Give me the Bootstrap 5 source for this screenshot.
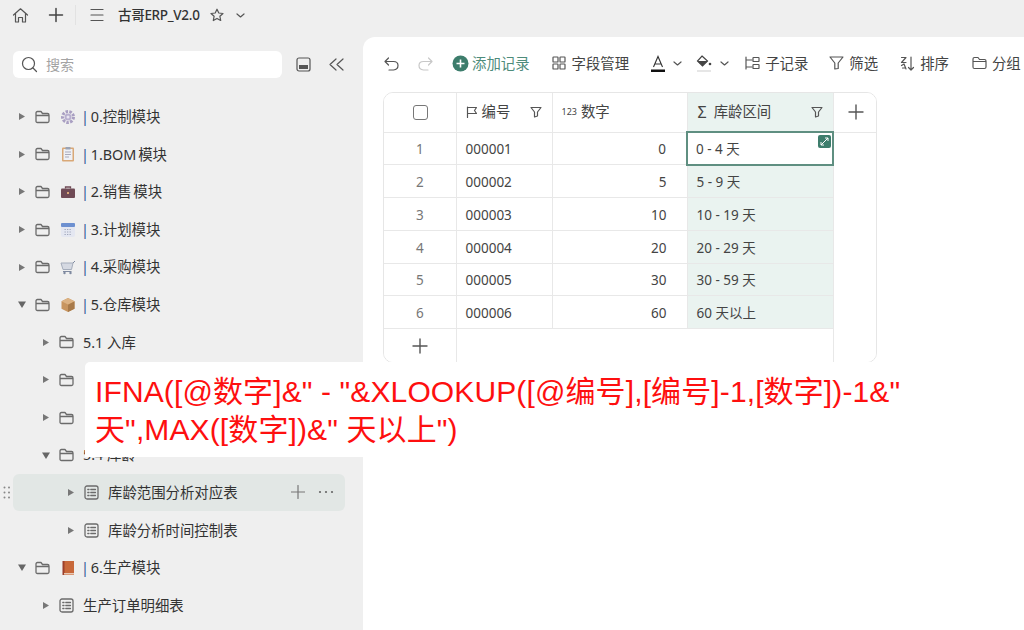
<!DOCTYPE html>
<html lang="zh"><head><meta charset="utf-8"><title>古哥ERP_V2.0</title>
<link href="https://cdn.jsdelivr.net/npm/bootstrap@5.3.0/dist/css/bootstrap.min.css" rel="stylesheet">
<style>
html,body{height:630px;overflow:hidden}
body{font-family:"Noto Sans","Noto Sans CJK SC",sans-serif;font-size:14px;color:#333;background:#efefef;position:relative;width:1024px}
svg{display:block;flex:none}
.ic{fill:none;stroke:#555;stroke-width:1.2;stroke-linecap:round;stroke-linejoin:round}
.topbar{height:30px;padding-left:12px}
.title-txt{font-size:13.5px;letter-spacing:-.3px;font-weight:500;color:#333;margin-left:14px;width:92px;white-space:nowrap}
.sep{width:1px;height:20px;background:#e2e2e2;margin:0 14px 0 11px}
.shell{height:600px}
.side{width:363px;flex:none}
.searchbox{width:269px;height:27px;margin-left:13px;background:#fff;border-radius:6px;color:#a3a3a3;padding-left:8px;gap:8px;font-size:14px}
.side-head{height:68px}
.trow{height:37.6px;display:flex;align-items:center;white-space:nowrap;font-size:14.4px;color:#333}
.l1{padding-left:18px;word-spacing:-2px}.l2{padding-left:42px}.l3{padding-left:67px}
.caret{width:8px;margin-right:9px;flex:none}
.fold{margin-right:9px;flex:none;stroke:#6b6b6b;stroke-width:1.3}
.emo{margin-left:1px;margin-right:5px;flex:none}
.bar{color:#2f5597}
.sel{position:relative}
.sel::before{content:"";position:absolute;left:13px;width:332px;top:0;bottom:1px;background:#e2e7e5;border-radius:6px}
.sel>*{position:relative}
.grip{position:absolute;left:3px;top:12px}
.acts{position:absolute!important;left:291px;top:11px;gap:13px}
.mainpane{flex:1;background:#fff;border-top-left-radius:12px;margin-top:7px;padding:0 0 0 20px;overflow:hidden;min-width:0}
.tools{height:55px;padding:0 0 2px 1px;white-space:nowrap;font-size:14.4px;color:#444}
.tools>span{display:inline-flex;align-items:center}
.tool{gap:4px}
.grid-wrap{width:494px;height:271px;border:1px solid #e6e6e6;border-radius:10px;overflow:hidden}
.dt{table-layout:fixed;border-collapse:collapse;width:493px;height:270px;margin:0;font-size:13.5px;color:#444}
.dt td,.dt th{border:1px solid #e8e8e8;padding:0 8px 0 9px;font-weight:400;vertical-align:middle;background:#fff}
.dt tr.rw td{padding-top:2px}
.dt tr>*:first-child{border-left:0}
.dt tr>*:last-child{border-right:0}
.dt tr:first-child>*{border-top:0;height:39px}
.dt tr.rw>*{height:32.8px}
.dt tr:last-child>*{border-bottom:0}
.dt td.text-end{padding-right:20px}
.dt th{font-size:14.4px}
.dt td.num{color:#777;text-align:center;padding-left:8px;padding-top:1px}
.dt td.active-cell{border:2px solid #5f8f81;padding-left:8px;position:relative}
.tint{background:#eaf3f0!important}
.expand{position:absolute;right:1px;top:2px;width:13px;height:13px;background:#3d7d6c;border-radius:2px}
.hdc{gap:4px;color:#444;white-space:nowrap}
.sigma{font-size:16px;line-height:1;margin-left:1px}
.flt{margin-right:2px}
.cbx{width:15px;height:15px;border:1.3px solid #777;border-radius:3px;margin:auto}
.callout{position:absolute;left:85px;top:362px;width:841px;height:95px;background:#fff;border-top-left-radius:5px;color:#fe0f0f;font-family:"Liberation Sans","Noto Sans CJK SC",sans-serif;font-size:30px;letter-spacing:.12px;line-height:38px;padding:11px 0 0 10px;white-space:nowrap}
</style></head>
<body>
<div class="topbar d-flex align-items-center">
<svg class="ic" width="17" height="17" viewBox="0 0 17 17"><path d="M1.5 8 8.500 1.800 15.500 8M3.500 6.500V15H6.500V10.500H10.500V15H13.500V6.500"/></svg>
<svg class="ic" style="stroke:#444;stroke-width:1.5;margin-left:19px" width="16" height="16" viewBox="0 0 16 16"><path d="M8 1.500V14.500M1.500 8H14.500"/></svg>
<span class="sep"></span>
<svg class="ic" width="14" height="14" viewBox="0 0 14 14"><path d="M1 1.500H13M1 7H13M1 12.500H13"/></svg>
<span class="title-txt">古哥ERP_V2.0</span>
<svg class="ic" width="14" height="14" viewBox="0 0 14 14"><path d="M7 1.200 8.800 5 13 5.500 9.900 8.300 10.700 12.500 7 10.400 3.300 12.500 4.100 8.300 1 5.500 5.200 5Z"/></svg>
<svg class="ic" style="margin-left:12px" width="9" height="9" viewBox="0 0 9 9"><path d="M1 3 4.500 6 8 3"/></svg>
</div>
<div class="shell d-flex">
<aside class="side">
<div class="side-head d-flex align-items-center">
<div class="searchbox d-flex align-items-center"><svg class="ic" width="17" height="17" viewBox="0 0 17 17"><circle cx="7.500" cy="7.500" r="6"/><path d="M12 12 15.500 15.500"/></svg>搜索</div>
<svg class="ic" style="margin-left:14px" width="15" height="15" viewBox="0 0 15 15"><rect x="1" y="1" width="13" height="13" rx="2"/><rect x="3" y="8" width="9" height="4" fill="#555" stroke="none"/></svg>
<svg class="ic" style="margin-left:18px" width="15" height="13" viewBox="0 0 15 13"><path d="M7 1 1 6.500 7 12M14 1 8 6.500 14 12"/></svg>
</div>
<div class="tree">
<div class="trow l1"><svg class="caret" width="8" height="9" viewBox="0 0 8 9"><path d="M1 1 7 4.500 1 8Z" fill="#777"/></svg><svg class="fold ic" width="15" height="14" viewBox="0 0 15 14"><path d="M1 3Q1 1.500 2.500 1.500H6L7.500 3.500H12.500Q14 3.500 14 5V11Q14 12.500 12.500 12.500H2.500Q1 12.500 1 11ZM1 5.500H14"/></svg><svg class="emo" width="16" height="16" viewBox="0 0 16 16"><circle cx="8" cy="8" r="5.500" fill="none" stroke="#a99fc2" stroke-width="3" stroke-dasharray="2.500 1.300"/><circle cx="8" cy="8" r="3.500" fill="#b9b0cf"/><circle cx="8" cy="8" r="1.500" fill="#e8e4f0"/></svg><span><span class="bar">|</span> 0.控制模块</span></div>
<div class="trow l1"><svg class="caret" width="8" height="9" viewBox="0 0 8 9"><path d="M1 1 7 4.500 1 8Z" fill="#777"/></svg><svg class="fold ic" width="15" height="14" viewBox="0 0 15 14"><path d="M1 3Q1 1.500 2.500 1.500H6L7.500 3.500H12.500Q14 3.500 14 5V11Q14 12.500 12.500 12.500H2.500Q1 12.500 1 11ZM1 5.500H14"/></svg><svg class="emo" width="16" height="16" viewBox="0 0 16 16"><rect x="2" y="1.500" width="12" height="14" rx="1" fill="#d9a877"/><rect x="3.500" y="3" width="9" height="11" fill="#eef0f6"/><rect x="5.500" y="1" width="5" height="2.500" fill="#9aa3b5"/><path d="M5 6H11M5 8.500H11M5 11H9" stroke="#aab" fill="none"/></svg><span><span class="bar">|</span> 1.BOM 模块</span></div>
<div class="trow l1"><svg class="caret" width="8" height="9" viewBox="0 0 8 9"><path d="M1 1 7 4.500 1 8Z" fill="#777"/></svg><svg class="fold ic" width="15" height="14" viewBox="0 0 15 14"><path d="M1 3Q1 1.500 2.500 1.500H6L7.500 3.500H12.500Q14 3.500 14 5V11Q14 12.500 12.500 12.500H2.500Q1 12.500 1 11ZM1 5.500H14"/></svg><svg class="emo" width="16" height="16" viewBox="0 0 16 16"><rect x="1" y="4.500" width="14" height="9.500" rx="1" fill="#6f4a55"/><path d="M5.500 4.500V3H10.500V4.500" fill="none" stroke="#6f4a55" stroke-width="1.300"/><rect x="7" y="8" width="2" height="2" fill="#d9a877"/></svg><span><span class="bar">|</span> 2.销售 模块</span></div>
<div class="trow l1"><svg class="caret" width="8" height="9" viewBox="0 0 8 9"><path d="M1 1 7 4.500 1 8Z" fill="#777"/></svg><svg class="fold ic" width="15" height="14" viewBox="0 0 15 14"><path d="M1 3Q1 1.500 2.500 1.500H6L7.500 3.500H12.500Q14 3.500 14 5V11Q14 12.500 12.500 12.500H2.500Q1 12.500 1 11ZM1 5.500H14"/></svg><svg class="emo" width="16" height="16" viewBox="0 0 16 16"><rect x="1" y="1" width="14" height="14" rx="2" fill="#e4e7f1"/><rect x="1" y="1" width="14" height="4" rx="1" fill="#6d90d0"/><path d="M4.500 7.500H11.500M4.500 10H11.500M4.500 12.500H11.500" stroke="#9fa6bb" stroke-dasharray="1.300 1.200"/></svg><span><span class="bar">|</span> 3.计划模块</span></div>
<div class="trow l1"><svg class="caret" width="8" height="9" viewBox="0 0 8 9"><path d="M1 1 7 4.500 1 8Z" fill="#777"/></svg><svg class="fold ic" width="15" height="14" viewBox="0 0 15 14"><path d="M1 3Q1 1.500 2.500 1.500H6L7.500 3.500H12.500Q14 3.500 14 5V11Q14 12.500 12.500 12.500H2.500Q1 12.500 1 11ZM1 5.500H14"/></svg><svg class="emo" width="16" height="16" viewBox="0 0 16 16"><path d="M1 4H13L11.500 10.500H3Z" fill="#d5d9e2" stroke="#a5adbb"/><path d="M13 4 15 2M3 12.500H11.500" stroke="#7f8aa0" fill="none"/><circle cx="4.500" cy="14" r="1.200" fill="#7f8aa0"/><circle cx="10.500" cy="14" r="1.200" fill="#7f8aa0"/></svg><span><span class="bar">|</span> 4.采购模块</span></div>
<div class="trow l1"><svg class="caret" width="8" height="9" viewBox="0 0 8 9"><path d="M0 1.500H8L4 8Z" fill="#666"/></svg><svg class="fold ic" width="15" height="14" viewBox="0 0 15 14"><path d="M1 3Q1 1.500 2.500 1.500H6L7.500 3.500H12.500Q14 3.500 14 5V11Q14 12.500 12.500 12.500H2.500Q1 12.500 1 11ZM1 5.500H14"/></svg><svg class="emo" width="16" height="16" viewBox="0 0 16 16"><path d="M8 1 14.500 4.300V11.700L8 15 1.500 11.700V4.300Z" fill="#c8955f"/><path d="M8 15V7.500L14.500 4.300V11.700Z" fill="#a87a4a"/><path d="M8 1 14.500 4.300 8 7.500 1.500 4.300Z" fill="#dcb283"/></svg><span><span class="bar">|</span> 5.仓库模块</span></div>
<div class="trow l2"><svg class="caret" width="8" height="9" viewBox="0 0 8 9"><path d="M1 1 7 4.500 1 8Z" fill="#777"/></svg><svg class="fold ic" width="15" height="14" viewBox="0 0 15 14"><path d="M1 3Q1 1.500 2.500 1.500H6L7.500 3.500H12.500Q14 3.500 14 5V11Q14 12.500 12.500 12.500H2.500Q1 12.500 1 11ZM1 5.500H14"/></svg><span>5.1 入库</span></div>
<div class="trow l2"><svg class="caret" width="8" height="9" viewBox="0 0 8 9"><path d="M1 1 7 4.500 1 8Z" fill="#777"/></svg><svg class="fold ic" width="15" height="14" viewBox="0 0 15 14"><path d="M1 3Q1 1.500 2.500 1.500H6L7.500 3.500H12.500Q14 3.500 14 5V11Q14 12.500 12.500 12.500H2.500Q1 12.500 1 11ZM1 5.500H14"/></svg></div>
<div class="trow l2"><svg class="caret" width="8" height="9" viewBox="0 0 8 9"><path d="M1 1 7 4.500 1 8Z" fill="#777"/></svg><svg class="fold ic" width="15" height="14" viewBox="0 0 15 14"><path d="M1 3Q1 1.500 2.500 1.500H6L7.500 3.500H12.500Q14 3.500 14 5V11Q14 12.500 12.500 12.500H2.500Q1 12.500 1 11ZM1 5.500H14"/></svg></div>
<div class="trow l2"><svg class="caret" width="8" height="9" viewBox="0 0 8 9"><path d="M0 1.500H8L4 8Z" fill="#666"/></svg><svg class="fold ic" width="15" height="14" viewBox="0 0 15 14"><path d="M1 3Q1 1.500 2.500 1.500H6L7.500 3.500H12.500Q14 3.500 14 5V11Q14 12.500 12.500 12.500H2.500Q1 12.500 1 11ZM1 5.500H14"/></svg><span>5.4 库龄</span></div>
<div class="trow l3 sel"><svg class="grip" width="8" height="13" viewBox="0 0 8 13"><g fill="#888"><circle cx="1.500" cy="1.500" r="1"/><circle cx="6" cy="1.500" r="1"/><circle cx="1.500" cy="6.500" r="1"/><circle cx="6" cy="6.500" r="1"/><circle cx="1.500" cy="11.500" r="1"/><circle cx="6" cy="11.500" r="1"/></g></svg><svg class="caret" width="8" height="9" viewBox="0 0 8 9"><path d="M1 1 7 4.500 1 8Z" fill="#777"/></svg><svg class="fold ic" width="15" height="15" viewBox="0 0 15 15"><rect x="1" y="1" width="13" height="13" rx="2"/><path d="M3.800 4.500H5M3.800 7.500H5M3.800 10.500H5M6.800 4.500H11.500M6.800 7.500H11.500M6.800 10.500H11.500"/></svg><span>库龄范围分析对应表</span><div class="acts d-flex align-items-center"><svg class="ic" style="stroke:#777" width="14" height="14" viewBox="0 0 14 14"><path d="M7 .5V13.500M.5 7H13.500"/></svg><svg width="16" height="4" viewBox="0 0 16 4"><g fill="#666"><circle cx="2" cy="2" r="1.100"/><circle cx="8" cy="2" r="1.100"/><circle cx="14" cy="2" r="1.100"/></g></svg></div></div>
<div class="trow l3"><svg class="caret" width="8" height="9" viewBox="0 0 8 9"><path d="M1 1 7 4.500 1 8Z" fill="#777"/></svg><svg class="fold ic" width="15" height="15" viewBox="0 0 15 15"><rect x="1" y="1" width="13" height="13" rx="2"/><path d="M3.800 4.500H5M3.800 7.500H5M3.800 10.500H5M6.800 4.500H11.500M6.800 7.500H11.500M6.800 10.500H11.500"/></svg><span>库龄分析时间控制表</span></div>
<div class="trow l1"><svg class="caret" width="8" height="9" viewBox="0 0 8 9"><path d="M0 1.500H8L4 8Z" fill="#666"/></svg><svg class="fold ic" width="15" height="14" viewBox="0 0 15 14"><path d="M1 3Q1 1.500 2.500 1.500H6L7.500 3.500H12.500Q14 3.500 14 5V11Q14 12.500 12.500 12.500H2.500Q1 12.500 1 11ZM1 5.500H14"/></svg><svg class="emo" width="16" height="16" viewBox="0 0 16 16"><rect x="3" y="1" width="11" height="14" fill="#c8683a"/><rect x="2.500" y="1" width="2" height="14" fill="#9c3f2a"/><rect x="4" y="13" width="10" height="1.500" fill="#e7c9b5"/></svg><span><span class="bar">|</span> 6.生产模块</span></div>
<div class="trow l2"><svg class="caret" width="8" height="9" viewBox="0 0 8 9"><path d="M1 1 7 4.500 1 8Z" fill="#777"/></svg><svg class="fold ic" width="15" height="15" viewBox="0 0 15 15"><rect x="1" y="1" width="13" height="13" rx="2"/><path d="M3.800 4.500H5M3.800 7.500H5M3.800 10.500H5M6.800 4.500H11.500M6.800 7.500H11.500M6.800 10.500H11.500"/></svg><span>生产订单明细表</span></div>
</div>
</aside>
<main class="mainpane">
<div class="tools d-flex align-items-center">
<svg class="ic" width="15" height="14" viewBox="0 0 15 14"><path d="M4.500 1 1 4.500 4.500 8M1 4.500H9.500Q14 4.500 14 8.500T9.500 13H5"/></svg>
<svg class="ic" style="stroke:#c8c8c8;margin-left:19px" width="15" height="14" viewBox="0 0 15 14"><path d="M10.500 1 14 4.500 10.500 8M14 4.500H5.500Q1 4.500 1 8.500T5.500 13H10"/></svg>
<span class="tool" style="margin-left:19px;gap:3px;color:#4e8c7b"><svg width="17" height="17" viewBox="0 0 17 17"><circle cx="8.500" cy="8.500" r="8" fill="#3d7d6c"/><path d="M8.500 4.500V12.500M4.500 8.500H12.500" stroke="#fff" stroke-width="1.600"/></svg>添加记录</span>
<span class="tool" style="margin-left:22px"><svg class="ic" width="14" height="14" viewBox="0 0 14 14"><rect x="1" y="1" width="5" height="5" rx=".6"/><rect x="8" y="1" width="5" height="5" rx=".6"/><rect x="1" y="8" width="5" height="5" rx=".6"/><rect x="8" y="8" width="5" height="5" rx=".6"/></svg><span style="margin-left:2px">字段管理</span></span>
<span class="tool" style="margin-left:21px"><svg width="16" height="18" viewBox="0 0 16 18"><path d="M3.500 12 8 1.500 12.500 12M5 9H11" fill="none" stroke="#333" stroke-width="1.100"/><rect x="1" y="14.500" width="14" height="2.500" fill="#111"/></svg><svg class="ic" style="margin-left:3px" width="9" height="9" viewBox="0 0 9 9"><path d="M1 3 4.500 6 8 3"/></svg></span>
<span class="tool" style="margin-left:14px"><svg width="17" height="19" viewBox="0 0 17 19"><path d="M6 2 11.500 7 6.500 12 1.500 7Z" fill="none" stroke="#444" stroke-width="1.200"/><path d="M1.500 7H11.500L6.500 12Z" fill="#444"/><circle cx="14" cy="10" r="1.300" fill="#444"/><rect x="1" y="16" width="14" height="2" fill="#e6e6e6"/></svg><svg class="ic" style="margin-left:3px" width="9" height="9" viewBox="0 0 9 9"><path d="M1 3 4.500 6 8 3"/></svg></span>
<span class="tool" style="margin-left:16px;gap:5px"><svg class="ic" width="15" height="14" viewBox="0 0 15 14"><path d="M1 1V13M1 4H7M1 11H7"/><rect x="8" y="1.500" width="6" height="4" rx=".6"/><rect x="8" y="8.500" width="6" height="4" rx=".6"/></svg>子记录</span>
<span class="tool" style="margin-left:21px;gap:5px"><svg class="ic" width="15" height="14" viewBox="0 0 15 14"><path d="M1 1H14L9.200 7V12.500L5.800 13V7Z"/></svg>筛选</span>
<span class="tool" style="margin-left:22px;gap:5px"><svg class="ic" width="15" height="15" viewBox="0 0 15 15"><path d="M1.500 1.500H6L1.500 6.500H6M1.500 9.500 4 8 6 13M2.500 12H5.500M11 1V14M11 14 8.500 11.500M11 14 13.500 11.500"/></svg><span>排序</span></span>
<span class="tool" style="margin-left:23px;gap:5px"><svg class="ic" width="15" height="14" viewBox="0 0 15 14"><path d="M1 3Q1 1.500 2.500 1.500H6L7.500 3.500H12.500Q14 3.500 14 5V11Q14 12.500 12.500 12.500H2.500Q1 12.500 1 11ZM1 5.500H14"/></svg>分组</span>
</div>
<div class="grid-wrap">
<table class="dt">
<colgroup><col style="width:72px"><col style="width:96px"><col style="width:135px"><col style="width:146px"><col></colgroup>
<tr>
<th><div class="cbx"></div></th>
<th><div class="d-flex align-items-center hdc"><svg class="ic" width="12" height="12" viewBox="0 0 12 12"><path d="M1.500 1V11.500M1.500 1.500H10.500L8.500 4.500 10.500 7.500H1.500"/></svg>编号<svg class="ic ms-auto flt" width="12" height="12" viewBox="0 0 12 12"><path d="M1 1.500H11L7.500 6V10L4.500 11V6Z"/></svg></div></th>
<th><div class="d-flex align-items-center hdc"><span style="font-size:9px">123</span>数字</div></th>
<th class="tint"><div class="d-flex align-items-center hdc" style="gap:7px"><span class="sigma">Σ</span>库龄区间<svg class="ic ms-auto flt" width="12" height="12" viewBox="0 0 12 12"><path d="M1 1.500H11L7.500 6V10L4.500 11V6Z"/></svg></div></th>
<th><svg class="ic mx-auto" style="stroke-width:1.400" width="16" height="16" viewBox="0 0 16 16"><path d="M8 1V15M1 8H15"/></svg></th>
</tr>
<tr class="rw"><td class="num">1</td><td>000001</td><td class="text-end">0</td><td class="active-cell">0 - 4 天<span class="expand"><svg width="13" height="13" viewBox="0 0 13 13"><path d="M3 10 10 3M7 3H10V6M3 7V10H6" fill="none" stroke="#fff"/></svg></span></td><td rowspan="7"></td></tr>
<tr class="rw"><td class="num">2</td><td>000002</td><td class="text-end">5</td><td class="tint">5 - 9 天</td></tr>
<tr class="rw"><td class="num">3</td><td>000003</td><td class="text-end">10</td><td class="tint">10 - 19 天</td></tr>
<tr class="rw"><td class="num">4</td><td>000004</td><td class="text-end">20</td><td class="tint">20 - 29 天</td></tr>
<tr class="rw"><td class="num">5</td><td>000005</td><td class="text-end">30</td><td class="tint">30 - 59 天</td></tr>
<tr class="rw"><td class="num">6</td><td>000006</td><td class="text-end">60</td><td class="tint">60 天以上</td></tr>
<tr><td class="num"><svg class="ic mx-auto" style="stroke-width:1.400" width="16" height="16" viewBox="0 0 16 16"><path d="M8 1V15M1 8H15"/></svg></td><td colspan="3"></td></tr>
</table>
</div>
</main>
</div>
<div class="callout">IFNA([@数字]&amp;" - "&amp;XLOOKUP([@编号],[编号]-1,[数字])-1&amp;"<br>天",MAX([数字])&amp;" 天以上")</div>
<script src="https://cdn.jsdelivr.net/npm/bootstrap@5.3.0/dist/js/bootstrap.bundle.min.js"></script>
</body></html>
